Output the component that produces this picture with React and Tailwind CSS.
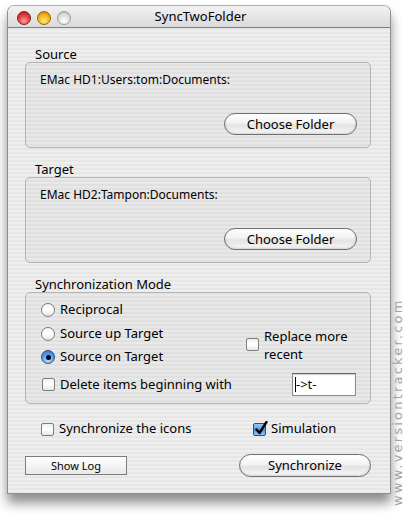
import React from 'react';

const stripes =
  'bg-[repeating-linear-gradient(180deg,#eeeeee_0px,#eeeeee_2px,#e6e6e6_2px,#e6e6e6_4px)]';

const AquaButton = ({ children, className = '' }) => (
  <button
    className={`h-[22px] rounded-full border border-[#6f6f6f] bg-[linear-gradient(180deg,#ffffff_0%,#f2f2f2_45%,#e2e2e2_55%,#f8f8f8_100%)] shadow-[inset_0_-1px_2px_rgba(0,0,0,0.15)] text-[13px] text-black leading-none ${className}`}
  >
    {children}
  </button>
);

const Radio = ({ checked }) =>
  checked ? (
    <span className="w-[14px] h-[14px] rounded-full border border-[#25508a] bg-[radial-gradient(circle_at_50%_80%,#b8e0ff_0%,#4a98e6_60%,#2f6fc0_100%)] flex items-center justify-center shrink-0">
      <span className="w-[5px] h-[5px] rounded-full bg-black" />
    </span>
  ) : (
    <span className="w-[14px] h-[14px] rounded-full border border-[#7d7d7d] bg-[linear-gradient(180deg,#f4f4f4_0%,#ffffff_50%,#e3e3e3_100%)] shrink-0" />
  );

const Check = ({ checked }) =>
  checked ? (
    <span className="relative w-[13px] h-[13px] rounded-[2px] border border-[#25508a] bg-[linear-gradient(180deg,#9cc9f4_0%,#4b97e4_55%,#8ec6f6_100%)] shrink-0">
      <svg
        className="absolute -top-[3px] left-[0px]"
        width="14"
        height="15"
        viewBox="0 0 14 15"
      >
        <path
          d="M2.5 8.5 L5.5 12 L12.5 1"
          fill="none"
          stroke="#000"
          strokeWidth="2.4"
          strokeLinecap="round"
          strokeLinejoin="round"
        />
      </svg>
    </span>
  ) : (
    <span className="w-[13px] h-[13px] rounded-[2px] border border-[#7d7d7d] bg-[linear-gradient(180deg,#f0f0f0_0%,#ffffff_50%,#e6e6e6_100%)] shrink-0" />
  );

const FolderGroup = ({ label, path }) => (
  <div>
    <div className="pl-[10px] h-[16px] leading-[16px] text-[13px]">{label}</div>
    <div className="h-[86px] rounded-[5px] border border-[#b4b4b4] bg-black/[0.025] flex flex-col">
      <div className="pl-[14px] pt-[9px] h-[16px] leading-[16px] text-[12px] box-content">
        {path}
      </div>
      <div className="mt-[25px] flex justify-end pr-[13px]">
        <AquaButton className="w-[133px]">Choose Folder</AquaButton>
      </div>
    </div>
  </div>
);

export default function App() {
  return (
    <div className="relative w-[405px] h-[513px] bg-white overflow-hidden font-['Noto_Sans',sans-serif] text-black">
      <div
        className={`ml-[7px] mt-[5px] w-[384px] h-[489px] rounded-t-[7px] border border-[#8e8e8e] border-t-[#b0b0b0] shadow-[0_9px_12px_rgba(0,0,0,0.45)] overflow-hidden ${stripes}`}
      >
        {/* title bar */}
        <div className="relative h-[22px] flex items-center border-b border-[#7e7e7e] bg-[linear-gradient(180deg,#f2f2f2_0%,#e6e6e6_50%,#dadada_100%)]">
          <div className="flex items-center gap-[6px] pl-[9px] pt-[2px]">
            <span className="w-[14px] h-[14px] rounded-full border border-[#8b1a1a] bg-[radial-gradient(circle_at_50%_75%,#ff9a9a_0%,#e23a3a_55%,#a51414_100%)]" />
            <span className="w-[14px] h-[14px] rounded-full border border-[#9a6400] bg-[radial-gradient(circle_at_50%_75%,#ffe47a_0%,#f4b21e_55%,#b87400_100%)]" />
            <span className="w-[14px] h-[14px] rounded-full border border-[#9a9a9a] bg-[radial-gradient(circle_at_50%_75%,#ffffff_0%,#dedede_55%,#b4b4b4_100%)]" />
          </div>
          <div className="absolute inset-0 flex items-center justify-center text-[13px] leading-none pl-[3px]">
            SyncTwoFolder
          </div>
        </div>

        {/* content */}
        <div className="pl-[17px] pr-[19px] pt-[18px]">
          <FolderGroup label="Source" path="EMac HD1:Users:tom:Documents:" />
          <div className="mt-[13px]">
            <FolderGroup label="Target" path="EMac HD2:Tampon:Documents:" />
          </div>

          {/* synchronization mode */}
          <div className="mt-[13px]">
            <div className="pl-[10px] h-[16px] leading-[16px] text-[13px]">
              Synchronization Mode
            </div>
            <div className="h-[112px] rounded-[5px] border border-[#b4b4b4] bg-black/[0.025] pt-[6px] pl-[15px] pr-[14px] text-[13px]">
              <div className="h-[22px] flex items-center gap-[5px]">
                <Radio />
                <span>Reciprocal</span>
              </div>
              <div className="flex mt-[2px]">
                <div className="w-[205px]">
                  <div className="h-[22px] flex items-center gap-[5px]">
                    <Radio />
                    <span>Source up Target</span>
                  </div>
                  <div className="h-[22px] mt-[1px] flex items-center gap-[5px]">
                    <Radio checked />
                    <span>Source on Target</span>
                  </div>
                </div>
                <div className="flex items-center gap-[5px] -mt-[2px]">
                  <Check />
                  <span className="leading-[18px]">
                    Replace more
                    <br />
                    recent
                  </span>
                </div>
              </div>
              <div className="h-[23px] mt-[5px] flex items-center">
                <div className="flex items-center gap-[5px] pl-[1px]">
                  <Check />
                  <span>Delete items beginning with</span>
                </div>
                <div className="ml-auto w-[64px] h-[23px] border border-[#8a8a8a] border-t-[#6a6a6a] bg-white shadow-[inset_0_1px_1px_rgba(0,0,0,0.2)] flex items-center pl-[2px] text-[13px]">
                  <span className="w-px h-[15px] bg-black" />
                  <span>-&gt;t-</span>
                </div>
              </div>
            </div>
          </div>

          {/* options */}
          <div className="mt-[17px] h-[16px] flex items-center text-[13px]">
            <div className="flex items-center gap-[5px] pl-[16px] w-[228px]">
              <Check />
              <span>Synchronize the icons</span>
            </div>
            <div className="flex items-center gap-[5px]">
              <Check checked />
              <span>Simulation</span>
            </div>
          </div>

          {/* buttons */}
          <div className="mt-[17px] flex items-center justify-between">
            <button className="w-[102px] h-[19px] border border-[#7d7d7d] bg-[linear-gradient(180deg,#ffffff_0%,#f4f4f4_50%,#e8e8e8_100%)] text-[11px] leading-none">
              Show Log
            </button>
            <AquaButton className="w-[132px] h-[23px]">Synchronize</AquaButton>
          </div>
        </div>
      </div>

      {/* watermark */}
      <div className="absolute left-[392px] top-[282px] h-[224px] [writing-mode:vertical-rl] rotate-180 text-[13px] tracking-[2.2px] text-[#a4a4a4] font-['DejaVu_Sans',sans-serif] leading-[12px]">
        www.versiontracker.com
      </div>
    </div>
  );
}
